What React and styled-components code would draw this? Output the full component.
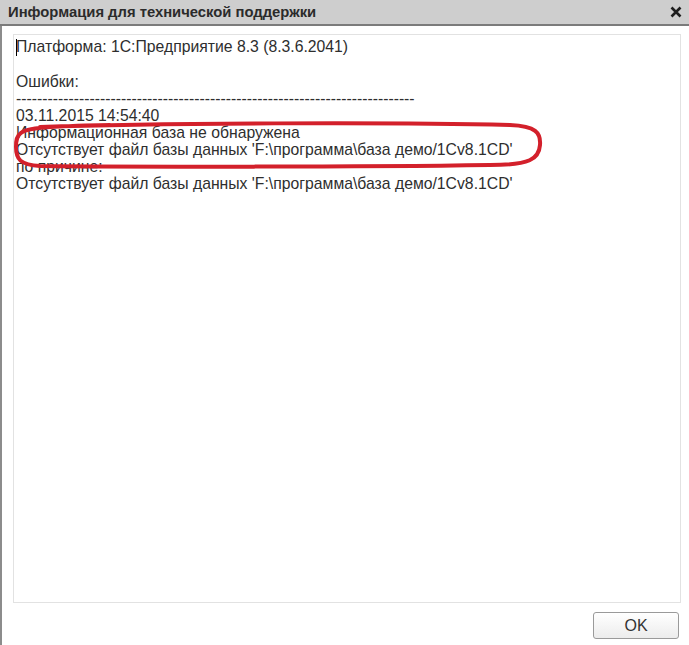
import styled, { createGlobalStyle } from "styled-components";

const Global = createGlobalStyle`
  html, body {
    margin: 0;
    padding: 0;
    background: #ffffff;
  }
  body {
    font-family: Arial, "Liberation Sans", sans-serif;
  }
`;

const Window = styled.div`
  width: 689px;
  height: 645px;
  display: flex;
  flex-direction: column;
  background: #ffffff;
  border-left: 2px solid #8c8c8c;
  box-sizing: border-box;
`;

const TitleBar = styled.div`
  height: 24px;
  flex: none;
  display: flex;
  align-items: center;
  justify-content: space-between;
  padding: 0 6px 0 8px;
  margin-left: -2px;
  background: #cecece;
  border-bottom: 2px solid #7b7b7b;
  box-sizing: content-box;
  h1 {
    margin: 0;
    font-size: 14.8px;
    font-weight: bold;
    color: #2b2b2b;
  }
`;

const Close = styled.button`
  width: 14px;
  height: 14px;
  padding: 0;
  border: 0;
  background: none;
  display: flex;
  align-items: center;
  justify-content: center;
`;

const Body = styled.div`
  flex: 1;
  display: flex;
  flex-direction: column;
  padding: 8px 8px 6px 11px;
`;

const TextBox = styled.div`
  position: relative;
  height: 564px;
  border: 1px solid #e2e2e2;
  padding: 3px 2px 0 2px;
  font-size: 15.75px;
  line-height: 17px;
  color: #2e2e2e;
  white-space: pre;
  p {
    margin: 0;
    min-height: 17px;
  }
`;

const Caret = styled.span`
  display: inline-block;
  width: 1px;
  height: 17px;
  background: #000;
  vertical-align: -4px;
  margin-right: -1px;
`;

const Mark = styled.svg`
  position: absolute;
  left: -4px;
  top: 86px;
  pointer-events: none;
`;

const Footer = styled.div`
  display: flex;
  justify-content: flex-end;
  padding-top: 9px;
  padding-right: 2px;
`;

const Button = styled.button`
  width: 86px;
  height: 27px;
  border: 1px solid #9a9a9a;
  border-radius: 3px;
  background: linear-gradient(#ffffff, #ececec);
  font-family: Arial, "Liberation Sans", sans-serif;
  font-size: 16px;
  color: #333;
  padding: 0;
`;

const lines = [
  "Платформа: 1С:Предприятие 8.3 (8.3.6.2041)",
  "",
  "Ошибки:",
  "-".repeat(76),
  "03.11.2015 14:54:40",
  "Информационная база не обнаружена",
  "Отсутствует файл базы данных 'F:\\программа\\база демо/1Cv8.1CD'",
  "по причине:",
  "Отсутствует файл базы данных 'F:\\программа\\база демо/1Cv8.1CD'",
];

export default function App() {
  return (
    <>
      <Global />
      <Window>
        <TitleBar>
          <h1>Информация для технической поддержки</h1>
          <Close aria-label="close">
            <svg width="12" height="12" viewBox="0 0 12 12">
              <path d="M1.5 1.5 L10.5 10.5 M10.5 1.5 L1.5 10.5" stroke="#1e1e1e" strokeWidth="2.6" />
            </svg>
          </Close>
        </TitleBar>
        <Body>
          <TextBox>
            {lines.map((t, i) => (
              <p key={i}>
                {i === 0 && <Caret />}
                {t}
              </p>
            ))}
            <Mark width="540" height="50" viewBox="0 0 540 50">
              <path
                d="M30 6 C 150 2, 380 1, 500 4 C 526 5, 531 12, 530 24 C 529 38, 520 44, 480 44 C 350 46, 130 46, 30 45 C 10 44, 6 38, 6 26 C 6 13, 8 8, 40 6 C 60 5, 80 4, 100 4"
                fill="none"
                stroke="#d3202b"
                strokeWidth="4"
                strokeLinecap="round"
              />
            </Mark>
          </TextBox>
          <Footer>
            <Button>OK</Button>
          </Footer>
        </Body>
      </Window>
    </>
  );
}
